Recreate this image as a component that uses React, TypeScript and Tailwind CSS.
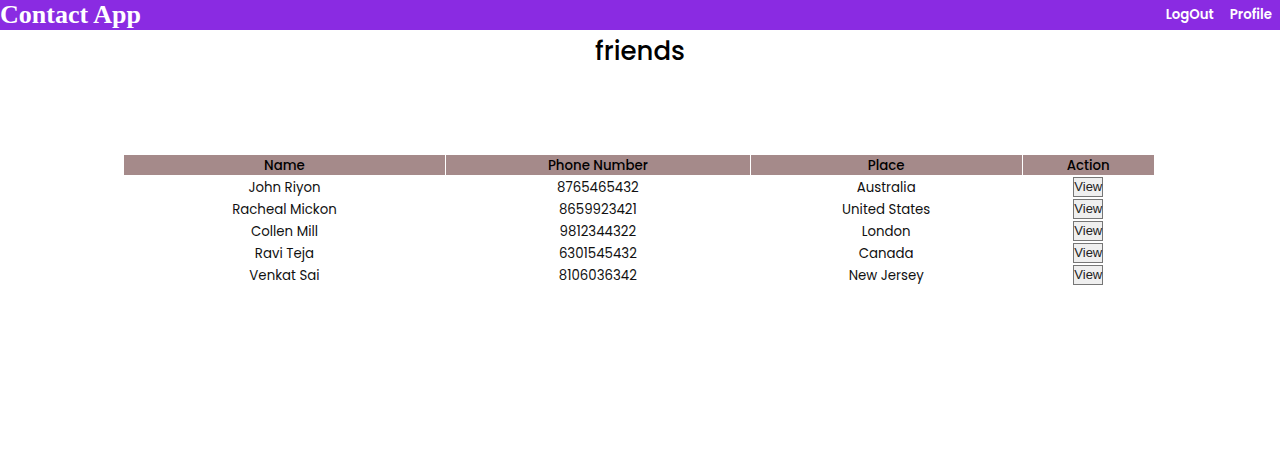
const friends = [
  ['John Riyon', '8765465432', 'Australia'],
  ['Racheal Mickon', '8659923421', 'United States'],
  ['Collen Mill', '9812344322', 'London'],
  ['Ravi Teja', '6301545432', 'Canada'],
  ['Venkat Sai', '8106036342', 'New Jersey'],
];

export default function App() {
  return (
    <div className="min-h-[461px] bg-white font-['Poppins','Lato',sans-serif] text-black">
      <nav className="flex h-[30px] items-center justify-between bg-[#8a2be2] pr-2">
        <span className="font-['Liberation_Serif',serif] text-[26px] font-bold leading-[30px] text-white">Contact App</span>
        <div className="flex gap-4 text-[13.33px] font-semibold text-white">
          <a>LogOut</a>
          <a>Profile</a>
        </div>
      </nav>

      <h1 className="mt-[3px] text-center text-[26px] font-medium leading-[36px]">friends</h1>

      <table className="ml-[123px] mt-[84px] w-[1032px] border-separate border-spacing-x-[1px] border-spacing-y-[2px] text-[13.33px]">
        <thead>
          <tr className="bg-[#a58a8a]">
            <th className="h-[20px] w-[320px] p-0 pt-[2px] font-medium leading-[18px]">Name</th>
            <th className="w-[303px] p-0 pt-[2px] font-medium leading-[18px]">Phone Number</th>
            <th className="w-[270px] p-0 pt-[2px] font-medium leading-[18px]">Place</th>
            <th className="w-[131px] p-0 pt-[2px] font-medium leading-[18px]">Action</th>
          </tr>
        </thead>
        <tbody>
          {friends.map(([name, phone, place]) => (
            <tr key={name} className="text-[#111]">
              <td className="h-[20px] p-0 pt-[2px] text-center align-middle leading-[18px]">{name}</td>
              <td className="p-0 pt-[2px] text-center align-middle leading-[18px]">{phone}</td>
              <td className="p-0 pt-[2px] text-center align-middle leading-[18px]">{place}</td>
              <td className="p-0 text-center align-middle leading-[0px]">
                <button className="h-[20px] border border-[#767676] bg-[#efefef] px-0 align-middle font-['Liberation_Sans',sans-serif] text-[13px] leading-[16px] text-[#222]">
                  View
                </button>
              </td>
            </tr>
          ))}
        </tbody>
      </table>
    </div>
  );
}
